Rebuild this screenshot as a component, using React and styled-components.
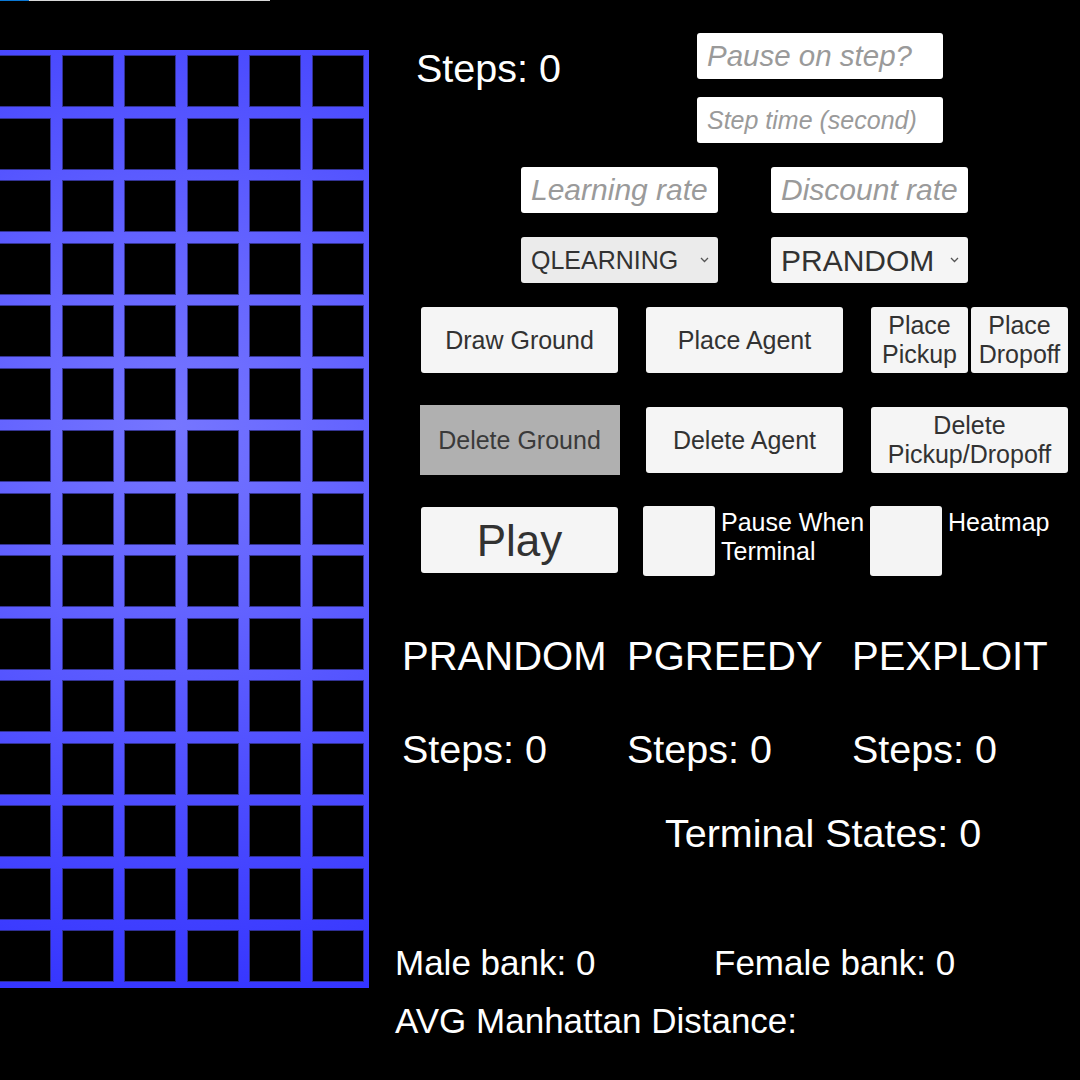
import React from "react";
import styled, { createGlobalStyle } from "styled-components";

const Global = createGlobalStyle`
  html, body { margin: 0; padding: 0; background: #000; }
  body { width: 1080px; height: 1080px; overflow: hidden; font-family: "Liberation Sans", Arial, sans-serif; }
  * { box-sizing: border-box; }
`;

const Page = styled.div`
  width: 1080px;
  height: 1080px;
  background: #000;
  display: flex;
  flex-direction: column;
  overflow: hidden;
`;

const Track = styled.div`
  width: 270px;
  height: 1px;
  background: #d9d9d9;
  flex-shrink: 0;
  display: flex;
`;

const Fill = styled.div`
  width: ${(p) => p.$w}px;
  height: 100%;
  background: #0a78d4;
`;

const Main = styled.div`
  display: flex;
  flex: 1;
`;

const Board = styled.div`
  margin-left: -6px;
  margin-top: 49px;
  width: 375px;
  height: 937.5px;
  flex-shrink: 0;
  padding: 6.25px;
  display: grid;
  grid-template-columns: repeat(6, 50px);
  grid-auto-rows: 50px;
  gap: 12.5px;
  background: radial-gradient(circle farthest-corner at 48% 40%, #7676ff 0%, #6464ff 30%, #4d4dff 62%, #3434ff 100%);
`;

const Cell = styled.div`
  background: #000;
  box-shadow: 0 0 0 1px rgba(45, 45, 130, 0.85);
`;

const Panel = styled.div`
  flex: 1;
  display: flex;
  flex-direction: column;
  color: #fff;
`;

const Row = styled.div`
  display: flex;
  align-items: ${(p) => p.$align || "flex-start"};
  margin-top: ${(p) => p.$top}px;
  padding-left: ${(p) => p.$left}px;
  gap: ${(p) => p.$gap || 0}px;
`;

const BigText = styled.div`
  font-size: ${(p) => p.$size}px;
  line-height: 1;
  color: #fff;
  white-space: nowrap;
  width: ${(p) => (p.$w ? `${p.$w}px` : "auto")};
  margin-top: ${(p) => p.$mt || 0}px;
  flex-shrink: 0;
`;

const Stack = styled.div`
  display: flex;
  flex-direction: column;
  gap: 18px;
`;

const Field = styled.input`
  width: ${(p) => p.$w}px;
  height: 46px;
  border: none;
  outline: none;
  border-radius: 3px;
  background: #fff;
  padding: 0 10px;
  font-family: "Liberation Sans", Arial, sans-serif;
  font-size: ${(p) => p.$size}px;
  font-style: italic;
  color: #323232;
  &::placeholder { color: #9a9a9a; font-style: italic; }
`;

const SelectWrap = styled.div`
  position: relative;
  width: 197px;
  height: 46px;
`;

const Select = styled.select`
  appearance: none;
  -webkit-appearance: none;
  width: 100%;
  height: 100%;
  border: none;
  outline: none;
  border-radius: 3px;
  background: ${(p) => p.$bg};
  padding: 0 10px;
  font-family: "Liberation Sans", Arial, sans-serif;
  font-size: ${(p) => p.$size}px;
  color: #323232;
`;

const Chevron = styled.svg`
  position: absolute;
  right: 9px;
  top: 20px;
  width: 9px;
  height: 6px;
  pointer-events: none;
`;

const Btn = styled.button`
  width: ${(p) => p.$w}px;
  height: ${(p) => p.$h || 66}px;
  margin: ${(p) => p.$m || "0"};
  border: none;
  border-radius: ${(p) => (p.$active ? 0 : 3)}px;
  background: ${(p) => (p.$active ? "#b0b0b0" : "#f5f5f5")};
  color: ${(p) => (p.$active ? "#3a3a3a" : "#323232")};
  font-family: "Liberation Sans", Arial, sans-serif;
  font-size: ${(p) => p.$size || 25}px;
  line-height: 29px;
  padding: 0;
  flex-shrink: 0;
  white-space: pre-line;
  display: flex;
  align-items: center;
  justify-content: center;
  text-align: center;
`;

const Pair = styled.div`
  display: flex;
  gap: 3px;
`;

const Check = styled.input`
  appearance: none;
  -webkit-appearance: none;
  margin: 0;
  width: 72px;
  height: 70px;
  border-radius: 3px;
  background: #f4f4f4;
  flex-shrink: 0;
`;

const CheckLabel = styled.div`
  width: ${(p) => p.$w}px;
  margin-left: 6px;
  margin-top: 2px;
  font-size: 25px;
  line-height: 29px;
  color: #fff;
  flex-shrink: 0;
`;

const Col = styled.div`
  width: 225px;
  flex-shrink: 0;
`;

function ChevronIcon() {
  return (
    <Chevron viewBox="0 0 9 6">
      <path d="M1 1 L4.5 4.5 L8 1" fill="none" stroke="#555" strokeWidth="1.3" />
    </Chevron>
  );
}

export default function App() {
  const cells = Array.from({ length: 90 });
  return (
    <Page>
      <Global />
      <Track>
        <Fill $w={29} />
      </Track>
      <Main>
        <Board>
          {cells.map((_, i) => (
            <Cell key={i} />
          ))}
        </Board>
        <Panel>
          <Row $top={32} $left={47}>
            <BigText $size={39.5} $w={281} $mt={16}>Steps: 0</BigText>
            <Stack>
              <Field $w={246} $size={29.5} placeholder="Pause on step?" />
              <Field $w={246} $size={25} placeholder="Step time (second)" />
            </Stack>
          </Row>
          <Row $top={24} $left={152} $gap={53}>
            <Field $w={197} $size={30} placeholder="Learning rate" />
            <Field $w={197} $size={30} placeholder="Discount rate" />
          </Row>
          <Row $top={24} $left={152} $gap={53}>
            <SelectWrap>
              <Select $bg="#ebebeb" $size={25} defaultValue="QLEARNING">
                <option>QLEARNING</option>
                <option>SARSA</option>
              </Select>
              <ChevronIcon />
            </SelectWrap>
            <SelectWrap>
              <Select $bg="#f5f5f5" $size={30} defaultValue="PRANDOM">
                <option>PRANDOM</option>
                <option>PGREEDY</option>
                <option>PEXPLOIT</option>
              </Select>
              <ChevronIcon />
            </SelectWrap>
          </Row>
          <Row $top={24} $left={52} $gap={28}>
            <Btn $w={197}>Draw Ground</Btn>
            <Btn $w={197}>Place Agent</Btn>
            <Pair>
              <Btn $w={97}>{"Place\nPickup"}</Btn>
              <Btn $w={97}>{"Place\nDropoff"}</Btn>
            </Pair>
          </Row>
          <Row $top={32} $left={52} $gap={28} $align="center">
            <Btn $w={200} $h={70} $m="0 -1.5px" $active>Delete Ground</Btn>
            <Btn $w={197}>Delete Agent</Btn>
            <Btn $w={197}>{"Delete\nPickup/Dropoff"}</Btn>
          </Row>
          <Row $top={31} $left={52}>
            <Btn $w={197} $size={44} $m="1px 25px 0 0">Play</Btn>
            <Check type="checkbox" aria-label="Pause When Terminal" />
            <CheckLabel $w={149}>Pause When Terminal</CheckLabel>
            <Check type="checkbox" aria-label="Heatmap" />
            <CheckLabel $w={120}>Heatmap</CheckLabel>
          </Row>
          <Row $top={60} $left={33}>
            <Col><BigText $size={40}>PRANDOM</BigText></Col>
            <Col><BigText $size={40}>PGREEDY</BigText></Col>
            <Col><BigText $size={40}>PEXPLOIT</BigText></Col>
          </Row>
          <Row $top={54} $left={33}>
            <Col><BigText $size={39.5}>Steps: 0</BigText></Col>
            <Col><BigText $size={39.5}>Steps: 0</BigText></Col>
            <Col><BigText $size={39.5}>Steps: 0</BigText></Col>
          </Row>
          <Row $top={44} $left={296}>
            <BigText $size={39.5}>Terminal States: 0</BigText>
          </Row>
          <Row $top={92} $left={26}>
            <BigText $size={35} $w={319}>Male bank: 0</BigText>
            <BigText $size={35}>Female bank: 0</BigText>
          </Row>
          <Row $top={23} $left={26}>
            <BigText $size={35}>AVG Manhattan Distance:</BigText>
          </Row>
        </Panel>
      </Main>
    </Page>
  );
}
